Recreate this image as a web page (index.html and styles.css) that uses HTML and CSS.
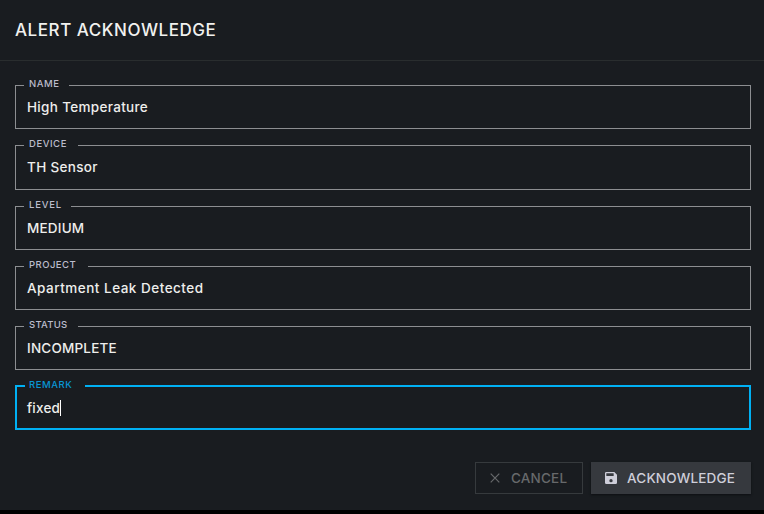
FILE: index.html
```
<!DOCTYPE html>
<html lang="en">
<head>
<meta charset="utf-8">
<title>Alert Acknowledge</title>
<link rel="stylesheet" href="styles.css">
</head>
<body>
<main class="dialog">
  <header class="dialog-header"><h1 class="title">ALERT ACKNOWLEDGE</h1></header>
  <form class="fields">
    <div class="field name"><span class="label"><span>NAME</span></span><span class="value">High Temperature</span></div>
    <div class="field device"><span class="label"><span>DEVICE</span></span><span class="value">TH Sensor</span></div>
    <div class="field level"><span class="label"><span>LEVEL</span></span><span class="value">MEDIUM</span></div>
    <div class="field project"><span class="label"><span>PROJECT</span></span><span class="value">Apartment Leak Detected</span></div>
    <div class="field status"><span class="label"><span>STATUS</span></span><span class="value">INCOMPLETE</span></div>
    <div class="field remark"><span class="label"><span>REMARK</span></span><span class="value">fixed</span><i class="caret"></i></div>
  </form>
  <footer class="actions">
    <button class="button cancel" type="button">
      <svg class="icon" viewBox="0 0 16 16"><path d="M3.7 3.7l8.6 8.6M12.3 3.7l-8.6 8.6" fill="none" stroke="currentColor" stroke-width="1.2"/></svg>
      <span>CANCEL</span>
    </button>
    <button class="button acknowledge" type="button">
      <svg class="icon" viewBox="0 0 24 24"><path fill="currentColor" d="M17 3H5a2 2 0 0 0-2 2v14a2 2 0 0 0 2 2h14a2 2 0 0 0 2-2V7l-4-4zm-5 15.500a2.500 2.500 0 1 1 0-5 2.500 2.500 0 0 1 0 5zm4-9.500H5V5h11v4z"/></svg>
      <span>ACKNOWLEDGE</span>
    </button>
  </footer>
</main>
</body>
</html>
```
FILE: styles.css
```
* { box-sizing: border-box; }
body { margin: 0; height: 514px; overflow: hidden; background: #000; font-family: Inter, Roboto, sans-serif; }
.dialog { height: 510px; background: #191c20; display: flex; flex-direction: column; }
.dialog-header { height: 61px; padding: 0 15px; border-bottom: 1px solid #292d2e; display: flex; align-items: center; flex: none; }
.title { margin: 0; color: #f1f1ef; font-size: 17px; font-weight: 500; line-height: 24px; letter-spacing: 0.55px; white-space: nowrap; }
.fields { padding: 24px 13px 0 15px; display: flex; flex-direction: column; gap: 16px; }
.field { position: relative; height: 44px; border: 1px solid #8c8e91; padding-left: 11px; display: flex; align-items: center; color: #eeeeec; font-size: 13.5px; font-weight: 550; line-height: 20px; letter-spacing: 0.32px; white-space: nowrap; }
.device { height: 45px; padding-bottom: 1px; }
.level, .status { letter-spacing: 0.2px; }
.project { letter-spacing: 0.5px; }
.label { position: absolute; left: 8px; top: -8px; height: 12px; padding-left: 5px; background: #191c20; color: #bcbccc; font-size: 9.5px; line-height: 12px; letter-spacing: 0.55px; }
.name .label { width: 45px; }
.device .label, .status .label { width: 54px; }
.status .label { letter-spacing: 0.25px; }
.level .label { width: 47px; letter-spacing: 0.8px; }
.project .label { width: 64px; letter-spacing: 0.45px; }
.remark { height: 45px; margin-top: -1px; border: 2px solid #00b0f3; padding-left: 10px; letter-spacing: 0.2px; }
.remark .label { width: 60px; padding-left: 4px; color: #0896d4; }
.caret { width: 1px; height: 16px; background: #fff; }
.actions { margin-top: 32px; padding-right: 13px; display: flex; justify-content: flex-end; gap: 8px; }
.button { height: 32px; margin: 0; border: 0; font: 500 13.5px/20px Inter, Roboto, sans-serif; letter-spacing: 0.2px; display: flex; align-items: center; white-space: nowrap; }
.icon { width: 16px; height: 16px; flex: none; margin-right: 8px; }
.cancel { width: 108px; padding: 0 11px; border: 1px solid #363a3d; background: transparent; color: #67696b; }
.acknowledge { width: 160px; padding: 0 12px; background: #36393e; color: #ceced9; box-shadow: 0 1px 2px #0d0f12; }
```
